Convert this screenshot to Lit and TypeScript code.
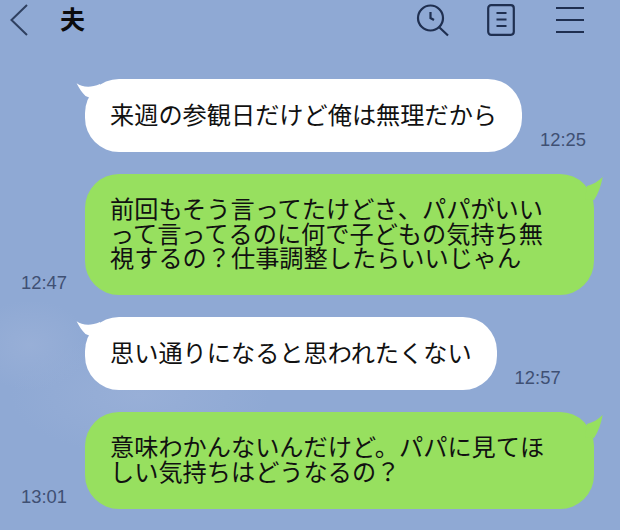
import { LitElement, html, css, svg } from 'lit';
import { customElement } from 'lit/decorators.js';

type Msg = { me: boolean; time: string; lines: string[] };

const MESSAGES: Msg[] = [
  { me: false, time: '12:25', lines: ['来週の参観日だけど俺は無理だから'] },
  {
    me: true,
    time: '12:47',
    lines: ['前回もそう言ってたけどさ、パパがいい', 'って言ってるのに何で子どもの気持ち無', '視するの？仕事調整したらいいじゃん'],
  },
  { me: false, time: '12:57', lines: ['思い通りになると思われたくない'] },
  { me: true, time: '13:01', lines: ['意味わかんないんだけど。パパに見てほ', 'しい気持ちはどうなるの？'] },
];

const tailIn = svg`<path d="M0.6 1.3C6 5 14 6.5 24 2L24 20L9.5 14C6 11 3 6 0.6 1.3Z" fill="#fff"/>`;
const tailOut = svg`<path d="M20.7 0C16 4.5 11 7.5 5 9L3 22L12 23C16 17 19 9 20.7 0Z" fill="#97e05f"/>`;

@customElement('app-root')
export class AppRoot extends LitElement {
  static styles = css`
    :host {
      display: block;
      width: 620px;
      height: 530px;
      overflow: hidden;
      font-family: 'Liberation Sans', 'Noto Sans CJK JP', sans-serif;
      color: #111;
      background:
        radial-gradient(ellipse 60px 45px at 30px 345px, #98afd7 0%, rgba(152, 175, 215, 0) 100%),
        radial-gradient(ellipse 130px 60px at 140px 395px, #98afd7 0%, rgba(152, 175, 215, 0) 100%),
        #8fa9d4;
    }

    .header {
      display: flex;
      align-items: center;
      height: 40px;
      padding: 0 36px 0 10px;
      margin-bottom: 39px;
    }

    .back {
      display: block;
    }

    .title {
      margin-left: 32px;
      font-size: 25px;
      font-weight: 700;
      line-height: 40px;
      color: #0b0b0b;
    }

    .icons {
      display: flex;
      align-items: center;
      margin-left: auto;
    }

    .icons svg {
      display: block;
    }

    .search {
      margin-right: 38px;
    }

    .doc {
      margin-right: 41px;
    }

    .list {
      display: flex;
      flex-direction: column;
      gap: 22px;
      padding: 0 26px 0 21px;
    }

    .row {
      display: flex;
      align-items: flex-end;
      gap: 17px;
    }

    .row.in {
      gap: 18px;
      padding-left: 64px;
    }

    .bubble {
      position: relative;
      padding: 24.5px 25px 23.5px;
      font-size: 24.2px;
      line-height: 24.5px;
      white-space: nowrap;
      border-radius: 34px;
    }

    .in .bubble {
      background: #fff;
    }

    .me .bubble {
      width: 459px;
      background: #97e05f;
    }

    .bubble svg {
      position: absolute;
      top: 3px;
    }

    .in .bubble svg {
      left: -9px;
    }

    .me .bubble svg {
      right: -13px;
    }

    .time {
      width: 47px;
      padding-bottom: 1px;
      font-size: 18.4px;
      line-height: 22px;
      color: #3f5073;
    }
  `;

  private renderMessage(m: Msg) {
    const bubble = html`<div class="bubble">
      <svg width="25" height="27" viewBox="0 0 25 27">${m.me ? tailOut : tailIn}</svg>
      ${m.lines.map((l, i) => html`${i > 0 ? html`<br />` : ''}${l}`)}
    </div>`;
    const time = html`<div class="time">${m.time}</div>`;
    return html`<div class="row ${m.me ? 'me' : 'in'}">${m.me ? html`${time}${bubble}` : html`${bubble}${time}`}</div>`;
  }

  render() {
    return html`
      <div class="header">
        <svg class="back" width="18" height="32" viewBox="0 0 18 32" fill="none" stroke="#2f4060" stroke-width="2">
          <path d="M17 1L1.5 16L17 31" />
        </svg>
        <div class="title">夫</div>
        <div class="icons">
          <svg class="search" width="33" height="33" viewBox="0 0 33 33" fill="none" stroke="#1f2f50" stroke-width="2.2">
            <circle cx="14.5" cy="14" r="12.5" />
            <path d="M14.5 8V14L18 16M23.5 23.5L32 31.5" />
          </svg>
          <svg class="doc" width="28" height="32" viewBox="0 0 28 32" fill="none" stroke="#1f2f50" stroke-width="2.2">
            <rect x="1.2" y="1.2" width="25.6" height="29.6" rx="3" />
            <path d="M9.5 9H19.5M9.5 15.5H19.5M9.5 22H19.5" />
          </svg>
          <svg width="28" height="28" viewBox="0 0 28 28" fill="none" stroke="#1f2f50" stroke-width="2.2">
            <path d="M0 2H28M0 14H28M0 26H28" />
          </svg>
        </div>
      </div>
      <div class="list">${MESSAGES.map((m) => this.renderMessage(m))}</div>
    `;
  }
}
